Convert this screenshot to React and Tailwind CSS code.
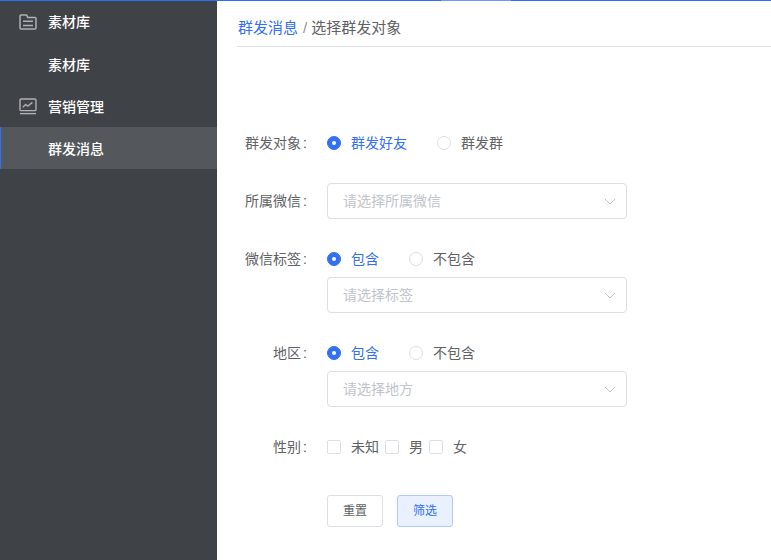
import React from "react";

const font = "font-['Microsoft_YaHei','Liberation_Sans','Noto_Sans_CJK_SC',sans-serif]";

const FolderIcon = () => (
  <svg width="18" height="16" viewBox="0 0 18 16" fill="none" stroke="#b0b2b5" strokeWidth="1.5">
    <path d="M1 14V2c0-.6.4-1 1-1h5.6l1.2 2.4H16c.6 0 1 .4 1 1V14c0 .6-.4 1-1 1H2c-.6 0-1-.4-1-1z" />
    <path d="M4 7.2h10M4 11.6h10" />
  </svg>
);

const ChartIcon = () => (
  <svg width="18" height="17" viewBox="0 0 18 17" fill="none" stroke="#b0b2b5" strokeWidth="1.4">
    <rect x="1" y="1" width="16" height="11.6" rx="1.2" />
    <path d="M3.8 9.2l3-2.8 2 1.8 4.6-3.8" />
    <path d="M1 15.6h16" />
  </svg>
);

const Chevron = () => (
  <svg width="12" height="7" viewBox="0 0 12 7" fill="none" stroke="#c0c4cc" strokeWidth="1">
    <path d="M1 1l5 5 5-5" />
  </svg>
);

const Radio = ({ label, checked, className = "" }) => (
  <div className={`flex items-center ${className}`}>
    <span
      className={`w-[14px] h-[14px] rounded-full border flex items-center justify-center ${
        checked ? "bg-[#3370f5] border-[#3370f5]" : "bg-white border-[#dcdfe6]"
      }`}
    >
      {checked && <span className="w-1 h-1 rounded-full bg-white" />}
    </span>
    <span className={`ml-[10px] text-[14px] ${checked ? "text-[#3370f5]" : "text-[#606266]"}`}>{label}</span>
  </div>
);

const Select = ({ placeholder }) => (
  <div className="w-[300px] h-9 border border-[#dcdfe6] rounded flex items-center justify-between pl-[15px] pr-[10px] bg-white">
    <span className="text-[14px] text-[#c0c4cc]">{placeholder}</span>
    <Chevron />
  </div>
);

const Check = ({ label, className = "" }) => (
  <div className={`flex items-center ${className}`}>
    <span className="w-[14px] h-[14px] rounded-[2px] border border-[#dcdfe6] bg-white" />
    <span className="ml-[10px] text-[14px] text-[#606266]">{label}</span>
  </div>
);

const Row = ({ label, className = "", children }) => (
  <div className={`flex ${className}`}>
    <label className="w-[70px] h-10 shrink-0 flex items-center justify-end text-[14px] text-[#606266]">
      {label}
      <span className="ml-[2px]">:</span>
    </label>
    <div className="ml-5 flex-1">{children}</div>
  </div>
);

export default function App() {
  return (
    <div className={`w-[771px] h-[560px] overflow-hidden flex flex-col bg-white ${font}`}>
      <div className="h-px bg-[#2d6ff0] flex shrink-0">
        <div className="ml-[441px] w-[70px] bg-[#6c9bf4]" />
      </div>
      <div className="flex flex-1 min-h-0">
        <aside className="w-[217px] shrink-0 bg-[#3f4247] text-white text-[14px] font-medium">
          <div className="h-[42px] flex items-center pl-[19px]">
            <FolderIcon />
            <span className="ml-[11px]">素材库</span>
          </div>
          <div className="h-[42px] flex items-center pl-12 pt-[2px]">素材库</div>
          <div className="h-[42px] flex items-center pl-[19px]">
            <ChartIcon />
            <span className="ml-[11px] pt-[2px]">营销管理</span>
          </div>
          <div className="h-[42px] flex items-center pl-[47px] pt-[2px] bg-[#54575c] border-l border-[#3370f5]">群发消息</div>
        </aside>
        <main className="flex-1 min-w-0">
          <div className="ml-5 pl-px pt-[9px] h-[46px] border-b border-[#dcdfe6] flex items-center text-[15px]">
            <span className="text-[#3370f5]">群发消息</span>
            <span className="ml-[5px] mr-1 text-[#909399]">/</span>
            <span className="text-[#606266]">选择群发对象</span>
          </div>
          <form className="pl-[20px] pt-[76px]">
            <Row label="群发对象">
              <div className="h-10 flex items-center">
                <Radio label="群发好友" checked />
                <Radio label="群发群" className="ml-[30px]" />
              </div>
            </Row>
            <Row label="所属微信" className="mt-[18px]">
              <div className="h-10 flex items-center">
                <Select placeholder="请选择所属微信" />
              </div>
            </Row>
            <Row label="微信标签" className="mt-[18px]">
              <div className="h-[38px] pt-[2px] flex items-center">
                <Radio label="包含" checked />
                <Radio label="不包含" className="ml-[30px]" />
              </div>
              <Select placeholder="请选择标签" />
            </Row>
            <Row label="地区" className="mt-5">
              <div className="h-[38px] pt-[2px] flex items-center">
                <Radio label="包含" checked />
                <Radio label="不包含" className="ml-[30px]" />
              </div>
              <Select placeholder="请选择地方" />
            </Row>
            <Row label="性别" className="mt-5">
              <div className="h-10 flex items-center">
                <Check label="未知" />
                <Check label="男" className="ml-[6px]" />
                <Check label="女" className="ml-[6px]" />
              </div>
            </Row>
            <div className="mt-7 ml-[90px] flex gap-[14px]">
              <button type="button" className="w-14 h-8 border border-[#dcdfe6] rounded-[3px] bg-white text-[12px] text-[#606266]">重置</button>
              <button type="button" className="w-14 h-8 border border-[#aecaff] rounded-[3px] bg-[#e9f0fe] text-[12px] text-[#3370f5]">筛选</button>
            </div>
          </form>
        </main>
      </div>
    </div>
  );
}
